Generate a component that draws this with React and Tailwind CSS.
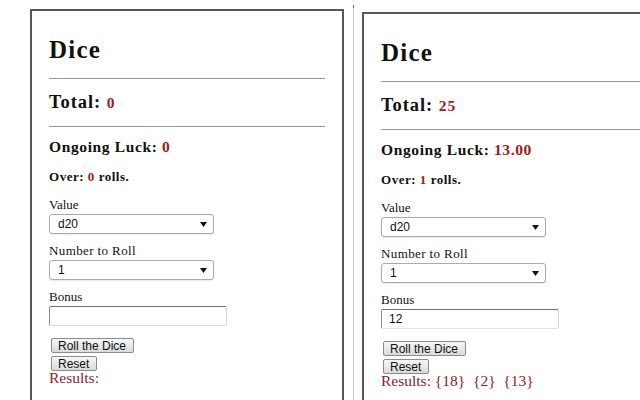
import React from 'react';

const serif = { fontFamily: '"Liberation Serif", "Times New Roman", serif' };
const sans = { fontFamily: '"Liberation Sans", Arial, sans-serif' };

const rolls = [
    { total: '0', luck: '0', over: '0', bonus: '', results: '' },
    { total: '25', luck: '13.00', over: '1', bonus: '12', results: '{18}  {2}  {13}' },
];

const Arrow = () => (
    <svg width="7" height="5" viewBox="0 0 7 5" className="mr-[6px]">
        <path d="M0 0 L7 0 L3.5 5 Z" fill="#111" />
    </svg>
);

const Select = ({ value }) => (
    <div
        className="mt-[1px] flex h-[20px] w-[165px] items-center justify-between rounded-[3px] border border-[#ababab] bg-white pl-[8px] text-[12px] text-[#111] shadow-[0_1px_1px_rgba(0,0,0,0.08)]"
        style={sans}
    >
        <span>{value}</span>
        <Arrow />
    </div>
);

const Button = ({ children, className = '' }) => (
    <div
        className={`flex h-[15px] items-center rounded-[2px] border border-[#8c8c8c] bg-linear-to-b from-[#f7f7f7] to-[#dadada] px-[6px] text-[12px] leading-none text-[#111] ${className}`}
        style={sans}
    >
        {children}
    </div>
);

const DicePanel = ({ data, className }) => (
    <div className={`h-[420px] shrink-0 border-2 border-[#575757] bg-white px-[17px] pt-[25px] text-[#111] ${className}`} style={serif}>
        <h1 className="text-[25px] leading-[28px] font-bold tracking-[0.05em]">Dice</h1>

        <div className="mt-[14px] border-t border-[#9a9a9a]" />

        <h2 className="mt-[12px] text-[18.5px] leading-[22px] font-bold tracking-[0.05em]">
            Total: <span className="text-[15.5px] leading-[14px] text-[#9e1b1b]">{data.total}</span>
        </h2>

        <div className="mt-[13px] border-t border-[#9a9a9a]" />

        <h3 className="mt-[11px] text-[15.5px] leading-[18px] font-bold tracking-[0.04em]">
            Ongoing Luck: <span className="text-[#9e1b1b]">{data.luck}</span>
        </h3>

        <p className="mt-[13px] text-[13px] leading-[16px] font-bold tracking-[0.04em]">
            Over: <span className="text-[#9e1b1b]">{data.over}</span> rolls.
        </p>

        <div className="mt-[12px] text-[13px] leading-[16px]">Value</div>
        <Select value="d20" />

        <div className="mt-[9px] text-[13px] leading-[16px] tracking-[0.03em]">Number to Roll</div>
        <Select value="1" />

        <div className="mt-[9px] text-[13px] leading-[16px]">Bonus</div>
        <div
            className="mt-[1px] flex h-[20px] w-[178px] items-center rounded-[2px] border border-t-[#6f6f6f] border-l-[#8a8a8a] border-r-[#d4d4d4] border-b-[#e0e0e0] bg-white pl-[7px] text-[12px] text-[#111]"
            style={sans}
        >
            {data.bonus}
        </div>

        <div className="mt-[12px] ml-[2px] flex flex-col items-start gap-[3px]">
            <Button className="w-[83px]">Roll the Dice</Button>
            <Button className="w-[46px]">Reset</Button>
        </div>

        <div className="text-[15.5px] leading-[14px] whitespace-pre text-[#8b1e28]">
            Results: {data.results}
        </div>
    </div>
);

export default function App() {
    return (
        <div className="flex h-[400px] w-[640px] overflow-hidden bg-white">
            <DicePanel data={rolls[0]} className="mt-[9px] ml-[30px] w-[314px]" />

            <div className="mt-[5px] ml-[9px] flex w-px shrink-0 flex-col">
                <div className="h-[3px] bg-[#666]" />
                <div className="flex-1 bg-[#cfcfcf]" />
            </div>

            <DicePanel data={rolls[1]} className="mt-[12px] ml-[8px] w-[330px]" />
        </div>
    );
}
